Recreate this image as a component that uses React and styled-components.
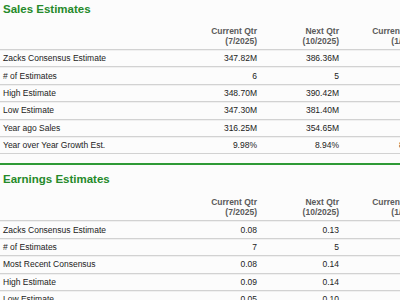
import styled, { createGlobalStyle } from "styled-components";

const GlobalStyle = createGlobalStyle`
  html, body {
    margin: 0;
    padding: 0;
    background: #fcfcfc;
    overflow: hidden;
  }
  body {
    font-family: "Liberation Sans", Arial, sans-serif;
  }
`;

const columns = [
  { title: "Current Qtr", period: "(7/2025)" },
  { title: "Next Qtr", period: "(10/2025)" },
  { title: "Current Year", period: "(1/2026)" },
  { title: "Next Year", period: "(1/2027)" },
];

const sections = [
  {
    title: "Sales Estimates",
    rows: [
      ["Zacks Consensus Estimate", "347.82M", "386.36M", "1.38B", "1.52B"],
      ["# of Estimates", "6", "5", "7", "7"],
      ["High Estimate", "348.70M", "390.42M", "1.39B", "1.55B"],
      ["Low Estimate", "347.30M", "381.40M", "1.37B", "1.49B"],
      ["Year ago Sales", "316.25M", "354.65M", "1.26B", "1.38B"],
      ["Year over Year Growth Est.", "9.98%", "8.94%", "8.92%", "10.25%"],
    ],
  },
  {
    title: "Earnings Estimates",
    rows: [
      ["Zacks Consensus Estimate", "0.08", "0.13", "0.40", "0.58"],
      ["# of Estimates", "7", "5", "8", "8"],
      ["Most Recent Consensus", "0.08", "0.14", "0.41", "0.60"],
      ["High Estimate", "0.09", "0.14", "0.42", "0.66"],
      ["Low Estimate", "0.05", "0.10", "0.37", "0.50"],
    ],
  },
];

function App() {
  return (
    <Page>
      <GlobalStyle />
      {sections.map((section, i) => (
        <Section key={"sec" + i} first={i === 0}>
          <Title first={i === 0}>{section.title}</Title>
          <HeaderRow first={i === 0}>
            <span></span>
            {columns.map((col, j) => (
              <HeadCell key={"h" + j}>
                {col.title}
                <br />
                {col.period}
              </HeadCell>
            ))}
          </HeaderRow>
          {section.rows.map((row, r) => (
            <Row key={"r" + r}>
              <Label>{row[0]}</Label>
              {row.slice(1).map((v, c) => (
                <Value key={"v" + c}>{v}</Value>
              ))}
            </Row>
          ))}
        </Section>
      ))}
    </Page>
  );
}

export default App;

const Page = styled.div`
  width: 620px;
  color: #222;
`;

const Section = styled.section`
  border-top: ${(props) => (props.first ? "none" : "2px solid #2f9a36")};
  padding-bottom: 9px;
`;

const Title = styled.h2`
  margin: ${(props) => (props.first ? "1px" : "6px")} 0 0 0;
  padding-left: 3px;
  font-size: 11.5px;
  line-height: 16px;
  font-weight: bold;
  color: #258a2a;
`;

const Grid = styled.div`
  display: grid;
  grid-template-columns: 179px 82px 82px 84px 84px;
`;

const HeaderRow = styled(Grid)`
  margin-top: ${(props) => (props.first ? "9px" : "10px")};
  padding-bottom: 3px;
`;

const HeadCell = styled.div`
  text-align: right;
  padding-right: 4px;
  font-size: 8.5px;
  line-height: 10px;
  font-weight: bold;
  color: #5a5a5a;
  white-space: nowrap;
`;

const Row = styled(Grid)`
  height: 16.4px;
  align-items: center;
  border-top: 1px solid #d2d2d2;
  box-shadow: inset 0 1px 0 #f0f0f0;
  font-size: 8.5px;
  &:last-child {
    border-bottom: 1px solid #d2d2d2;
  }
`;

const Label = styled.div`
  padding-left: 3px;
  white-space: nowrap;
`;

const Value = styled.div`
  text-align: right;
  padding-right: 4px;
  white-space: nowrap;
`;
